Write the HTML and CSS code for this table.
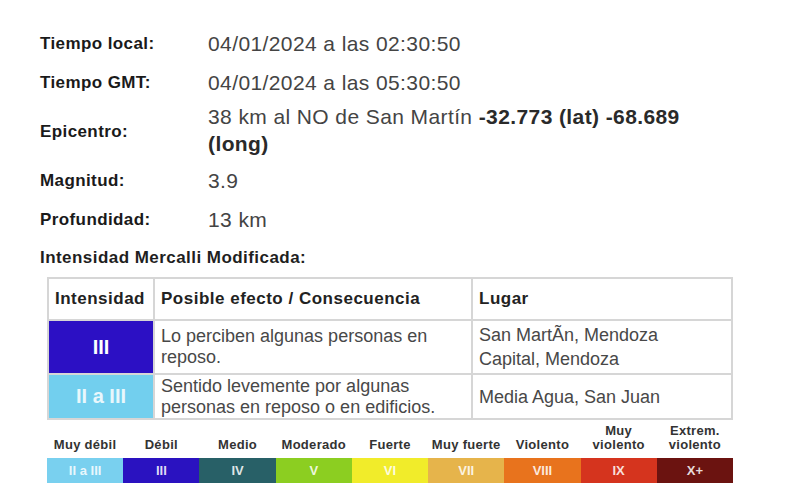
FILE: index.html
```html
<!DOCTYPE html>
<html lang="es">
<head>
<meta charset="utf-8">
<link rel="stylesheet" href="styles.css">
</head>
<body>
<div class="page">
  <div class="info">
    <div class="row"><div class="lbl">Tiempo local:</div><div class="val">04/01/2024 a las 02:30:50</div></div>
    <div class="row"><div class="lbl">Tiempo GMT:</div><div class="val">04/01/2024 a las 05:30:50</div></div>
    <div class="row tall"><div class="lbl">Epicentro:</div><div class="val">38 km al NO de San Martín <b>-32.773 (lat) -68.689 (long)</b></div></div>
    <div class="row"><div class="lbl">Magnitud:</div><div class="val">3.9</div></div>
    <div class="row"><div class="lbl">Profundidad:</div><div class="val">13 km</div></div>
  </div>
  <div class="title">Intensidad Mercalli Modificada:</div>
  <table class="mm">
    <tr class="head">
      <th class="c1">Intensidad</th>
      <th class="c2">Posible efecto / Consecuencia</th>
      <th class="c3">Lugar</th>
    </tr>
    <tr class="r2">
      <td class="int i3">III</td>
      <td>Lo perciben algunas personas en reposo.</td>
      <td class="place">San MartÃn, Mendoza<br>Capital, Mendoza</td>
    </tr>
    <tr class="r3">
      <td class="int i2">II a III</td>
      <td>Sentido levemente por algunas personas en reposo o en edificios.</td>
      <td class="place">Media Agua, San Juan</td>
    </tr>
  </table>
  <div class="scale">
    <div class="labels">
      <span>Muy débil</span><span>Débil</span><span>Medio</span><span>Moderado</span><span>Fuerte</span><span>Muy fuerte</span><span>Violento</span><span>Muy<br>violento</span><span>Extrem.<br>violento</span>
    </div>
    <div class="bar">
      <span class="s1">II a III</span><span class="s2">III</span><span class="s3">IV</span><span class="s4">V</span><span class="s5">VI</span><span class="s6">VII</span><span class="s7">VIII</span><span class="s8">IX</span><span class="s9">X+</span>
    </div>
  </div>
</div>
</body>
</html>
```

FILE: styles.css
```css
html, body { margin: 0; padding: 0; background: #fff; }
body { font-family: "Liberation Sans", Arial, sans-serif; }
.page { padding: 24px 0 0 40px; width: 700px; }
.info { display: flex; flex-direction: column; }
.row { display: grid; grid-template-columns: 168px 500px; align-items: center; height: 39px; }
.row.tall { height: 59px; }
.row.tall .val { margin-top: -4px; }
.lbl { font-weight: bold; font-size: 17px; letter-spacing: 0.4px; color: #1a1a1a; }
.val { font-size: 21px; letter-spacing: 0.4px; color: #444; line-height: 27px; }
.val b { color: #2a2a2a; }
.title { font-weight: bold; font-size: 17px; letter-spacing: 0.45px; color: #1f1f1f; margin-top: 8px; height: 21px; line-height: 21px; }
.mm { border-collapse: collapse; margin: 9px 0 0 7px; width: 686px; table-layout: fixed; }
.mm th, .mm td { border: 2px solid #d6d6d6; padding: 0 6px; text-align: left; vertical-align: middle; }
.mm th { font-size: 17px; letter-spacing: 0.5px; font-weight: bold; color: #222; height: 40px; }
.mm td { font-size: 18px; color: #484848; line-height: 21px; }
.mm td.place { line-height: 24px; }
.c1 { width: 92px; }
.c2 { width: 304px; }
.r2 td { height: 52px; }
.r3 td { height: 43px; }
.mm td.int { text-align: center; color: #fff; font-weight: bold; font-size: 20px; }
.i3 { background: #2c10c4; }
.i2 { background: #72cfee; color: #e9f7fc !important; }
.scale { margin: 4px 0 0 7px; width: 686px; }
.labels { display: grid; grid-template-columns: repeat(9, 1fr); align-items: end; }
.labels span { text-align: center; font-size: 13px; letter-spacing: 0.3px; font-weight: bold; color: #333; line-height: 14px; padding-bottom: 6px; }
.bar { display: grid; grid-template-columns: repeat(9, 1fr); height: 25px; }
.bar span { display: flex; align-items: center; justify-content: center; font-size: 13px; font-weight: bold; color: rgba(255,255,255,0.85); }
.s1 { background: #79d0ef; }
.s2 { background: #2a12c0; }
.s3 { background: #286067; }
.s4 { background: #8cce21; }
.s5 { background: #f1ec2a; }
.s6 { background: #e6b44b; }
.s7 { background: #e8731d; }
.s8 { background: #d5341e; }
.s9 { background: #6b1310; }
```
